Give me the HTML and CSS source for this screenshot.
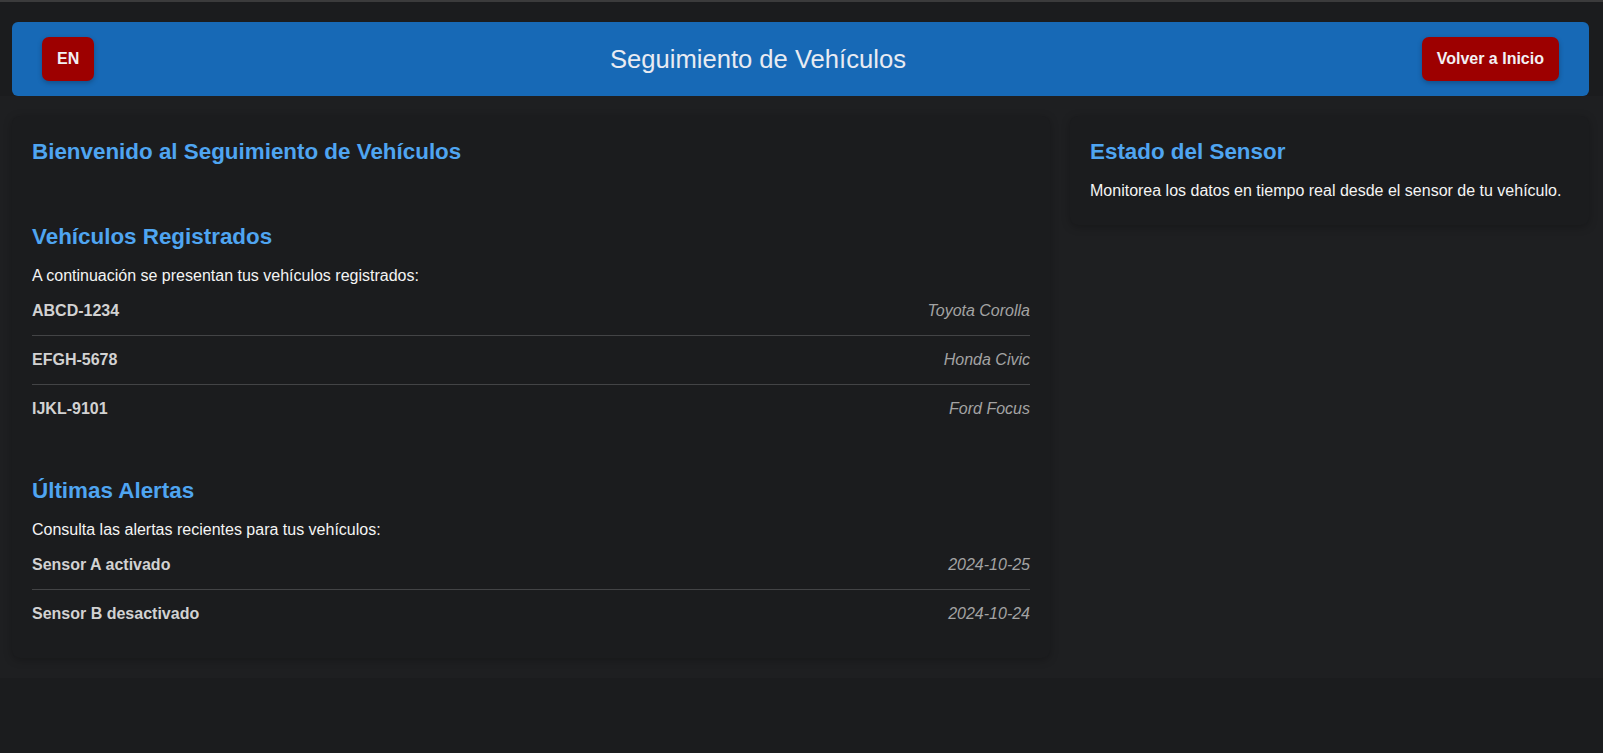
FILE: index.html
```
<!DOCTYPE html>
<html lang="es">
<head>
<meta charset="utf-8">
<title>Seguimiento de Vehículos</title>
<link rel="stylesheet" href="styles.css">
</head>
<body>
<div class="topline"></div>
<header class="header">
  <button class="btn">EN</button>
  <h1 class="title">Seguimiento de Vehículos</h1>
  <button class="btn">Volver a Inicio</button>
</header>
<main class="main">
  <div class="card card-left">
    <section class="section section-welcome">
      <h2 class="heading">Bienvenido al Seguimiento de Vehículos</h2>
    </section>
    <section class="section">
      <h2 class="heading">Vehículos Registrados</h2>
      <p class="text">A continuación se presentan tus vehículos registrados:</p>
      <ul class="list">
        <li class="row"><span class="row-key">ABCD-1234</span><span class="row-val">Toyota Corolla</span></li>
        <li class="row"><span class="row-key">EFGH-5678</span><span class="row-val">Honda Civic</span></li>
        <li class="row"><span class="row-key">IJKL-9101</span><span class="row-val">Ford Focus</span></li>
      </ul>
    </section>
    <section class="section section-last">
      <h2 class="heading">Últimas Alertas</h2>
      <p class="text">Consulta las alertas recientes para tus vehículos:</p>
      <ul class="list">
        <li class="row"><span class="row-key">Sensor A activado</span><span class="row-val">2024-10-25</span></li>
        <li class="row"><span class="row-key">Sensor B desactivado</span><span class="row-val">2024-10-24</span></li>
      </ul>
    </section>
  </div>
  <div class="card card-right">
    <h2 class="heading">Estado del Sensor</h2>
    <p class="text">Monitorea los datos en tiempo real desde el sensor de tu vehículo.</p>
  </div>
</main>
</body>
</html>
```
FILE: styles.css
```
* { box-sizing: border-box; }
html, body { margin: 0; padding: 0; }
body {
  background: #1b1c1e;
  font-family: "Liberation Sans", Arial, sans-serif;
  color: #f2f2f2;
  min-height: 753px;
}
.topline { height: 2px; background: #3b3b3c; }
.header {
  margin: 20px 14px 0 12px;
  height: 74px;
  padding: 0 30px;
  background: #1769b6;
  border-radius: 6px;
  display: flex;
  align-items: center;
  justify-content: space-between;
}
.title {
  margin: 0;
  font-size: 25.6px;
  font-weight: normal;
  color: #e8ebf2;
}
.btn {
  font-family: inherit;
  font-size: 16px;
  font-weight: bold;
  line-height: 20px;
  padding: 12px 15px;
  border: none;
  border-radius: 7px;
  background: #9d0000;
  color: #f2f0f4;
  box-shadow: 0 2px 5px rgba(0, 0, 0, 0.25);
}
.main {
  background: #1e1f21;
  padding: 20px 14px 20px 12px;
  display: grid;
  grid-template-columns: 2fr 1fr;
  gap: 20px;
  align-items: start;
}
.card {
  background: #1b1c1e;
  border-radius: 8px;
  box-shadow: 0 2px 8px rgba(0, 0, 0, 0.25);
  padding: 20px;
}
.card-right { padding-bottom: 23px; }
.heading {
  margin: 0;
  font-size: 22.4px;
  line-height: 32px;
  font-weight: bold;
  color: #4fa5f1;
}
.text {
  margin: 13px 0 1px;
  font-size: 16px;
  line-height: 20px;
  color: #f4f4f4;
}
.section { margin-bottom: 42px; }
.section-welcome { margin-bottom: 53px; }
.section-last { margin-bottom: 0; }
.list { list-style: none; margin: 0; padding: 0; }
.row {
  display: flex;
  justify-content: space-between;
  padding: 14px 0;
  line-height: 20px;
  font-size: 16px;
  border-bottom: 1px solid #434446;
}
.row:last-child { border-bottom: none; }
.row-key { font-weight: bold; color: #d2d2d2; }
.row-val { font-style: italic; color: #a3a3a3; }
```
